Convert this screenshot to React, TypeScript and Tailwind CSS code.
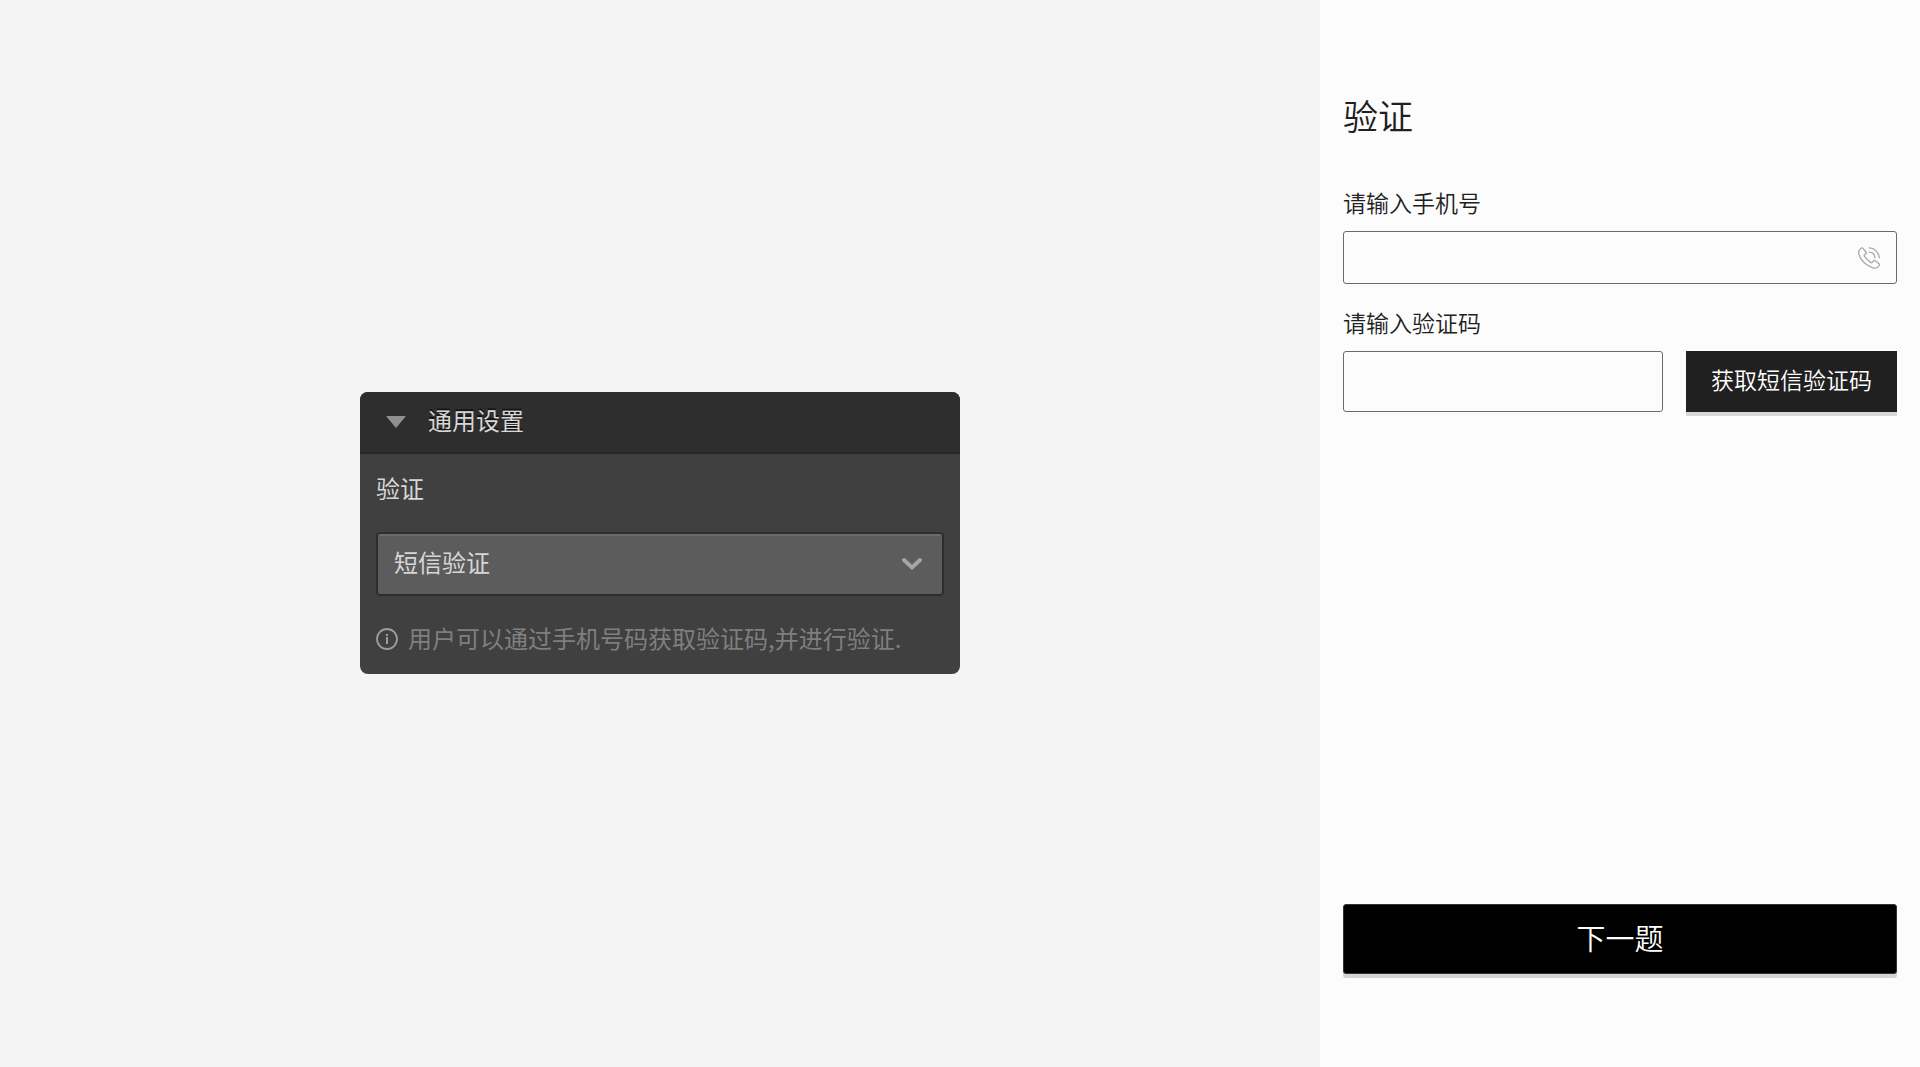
import { useState } from "react";

const fontStack = "font-['Noto_Sans_CJK_SC',sans-serif]";

function PhoneIcon() {
  return (
    <svg
      viewBox="0 0 22 22"
      className="size-[22px] shrink-0 text-[#a9a9a9]"
      fill="none"
      stroke="currentColor"
      strokeWidth="1.3"
      strokeLinecap="round"
      strokeLinejoin="round"
      aria-hidden="true"
    >
      <path d="M3 1.200C3.700.7 4.500.8 5 1.400L8 5c.4.500.4 1.100-.1 1.600L6.400 7.900c-.4.400-.4.800-.1 1.200 1.800 2.600 4 4.700 6.700 6.500.4.300.8.200 1.200-.2l1.300-1.600c.5-.5 1.100-.6 1.700-.1l3.800 3c.6.500.6 1.200.2 1.800-1.400 2.400-3.600 3.200-6.300 2.300C8.300 19 2.400 13.300.9 7 .4 4.600 1.100 2.500 3 1.200z" />
      <path d="M11.300.900c5.400.200 9.600 4.400 9.900 9.800" />
      <path d="M11.300 5.200c3.200.2 5.400 2.400 5.600 5.600" />
    </svg>
  );
}

function InfoIcon() {
  return (
    <svg viewBox="0 0 22 22" className="size-[22px] shrink-0" fill="none" aria-hidden="true">
      <circle cx="11" cy="11" r="10" stroke="#9c9c9c" strokeWidth="1.8" />
      <path d="M11 9v7M11 6v2" stroke="#9c9c9c" strokeWidth="2" />
    </svg>
  );
}

function SettingsPanel() {
  const [open, setOpen] = useState(true);
  const [mode, setMode] = useState("sms");

  return (
    <section className="w-full max-w-[600px] overflow-hidden rounded-lg bg-[#404040] text-2xl text-[#d6d6d6]">
      <button
        type="button"
        aria-expanded={open}
        onClick={() => setOpen(!open)}
        className="flex w-full items-center gap-[22px] border-b-2 border-[#282828] bg-[#2e2e2e] px-[26px] py-2.5 text-left leading-9 [text-shadow:0_-2px_0_#151515]"
      >
        <svg viewBox="0 0 20 12" className="h-3 w-5" aria-hidden="true">
          <path d="M0 0h20L10 12z" fill="#909090" />
        </svg>
        <span className="pb-1">通用设置</span>
      </button>
      {open && (
        <div className="p-4">
          <label htmlFor="mode" className="block leading-9">
            验证
          </label>
          <div className="relative mt-[26px]">
            <select
              id="mode"
              value={mode}
              onChange={(e) => setMode(e.target.value)}
              className="h-16 w-full appearance-none rounded border-2 border-[#2e2e2e] bg-[#5c5c5c] px-4 pb-1 shadow-[inset_0_2px_0_#6a6a6a]"
            >
              <option value="sms">短信验证</option>
            </select>
            <svg
              viewBox="0 0 20 12"
              className="pointer-events-none absolute top-[26px] right-[22px] h-3 w-5"
              fill="none"
              aria-hidden="true"
            >
              <path
                d="M2 2l8 7.500L18 2"
                stroke="#a5a5a5"
                strokeWidth="3.800"
                strokeLinecap="round"
              />
            </svg>
          </div>
          <p className="mt-6 flex items-center gap-2.5 leading-9 text-[#7f7f7f]">
            <InfoIcon />
            <span className="pb-0.5">用户可以通过手机号码获取验证码,并进行验证.</span>
          </p>
        </div>
      )}
    </section>
  );
}

function VerifyForm() {
  return (
    <form
      onSubmit={(e) => e.preventDefault()}
      className="flex flex-col bg-[#fcfcfc] px-[23px] pt-[89px] pb-[93px] text-[23px] font-[350] text-[#202020]"
    >
      <h1 className="text-[35px] leading-[52px] font-[350]">验证</h1>
      <label htmlFor="phone" className="mt-[43px] leading-9">
        请输入手机号
      </label>
      <div className="mt-[11px] flex h-[53px] items-center rounded-[3px] border border-[#6a6a6a] pr-4">
        <input id="phone" type="tel" className="h-full min-w-0 flex-1 bg-transparent px-3 outline-none" />
        <PhoneIcon />
      </div>
      <label htmlFor="code" className="mt-5 leading-9">
        请输入验证码
      </label>
      <div className="mt-[11px] flex gap-[23px]">
        <input
          id="code"
          type="text"
          className="h-[61px] min-w-0 flex-1 rounded-[3px] border border-[#6a6a6a] bg-transparent px-3 outline-none"
        />
        <button
          type="button"
          className="h-[61px] bg-[#202020] px-[25px] pb-1 text-white shadow-[0_4px_0_#d9d7d9]"
        >
          获取短信验证码
        </button>
      </div>
      <button
        type="submit"
        className="mt-auto h-[70px] rounded-[3px] border border-[#333333] bg-black pb-0.5 text-[29px] text-white shadow-[0_4px_0_#d3d3d3]"
      >
        下一题
      </button>
    </form>
  );
}

export default function App() {
  return (
    <main className={`grid min-h-screen grid-cols-[11fr_5fr] bg-[#f4f4f4] ${fontStack}`}>
      <div className="flex items-center justify-center pb-0.5">
        <SettingsPanel />
      </div>
      <VerifyForm />
    </main>
  );
}
